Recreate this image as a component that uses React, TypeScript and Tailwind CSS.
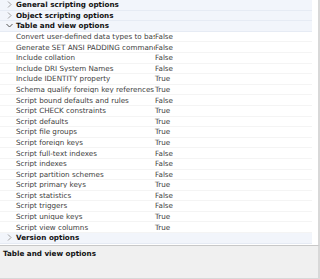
import { ReactNode } from "react";

type Item = [string, string];

const tableItems: Item[] = [
  ["Convert user-defined data types to base types", "False"],
  ["Generate SET ANSI PADDING commands", "False"],
  ["Include collation", "False"],
  ["Include DRI System Names", "False"],
  ["Include IDENTITY property", "True"],
  ["Schema qualify foreign key references", "True"],
  ["Script bound defaults and rules", "False"],
  ["Script CHECK constraints", "True"],
  ["Script defaults", "True"],
  ["Script file groups", "True"],
  ["Script foreign keys", "True"],
  ["Script full-text indexes", "False"],
  ["Script indexes", "False"],
  ["Script partition schemes", "False"],
  ["Script primary keys", "True"],
  ["Script statistics", "False"],
  ["Script triggers", "False"],
  ["Script unique keys", "True"],
  ["Script view columns", "True"],
];

function Chevron({ open }: { open: boolean }) {
  return (
    <svg width="7" height="7" viewBox="0 0 7 7" className="shrink-0">
      {open ? (
        <path d="M0.5 2 L3.5 5 L6.5 2" fill="none" stroke="#555" strokeWidth="1" />
      ) : (
        <path d="M2 0.5 L5 3.5 L2 6.5" fill="none" stroke="#a0a0a0" strokeWidth="1" />
      )}
    </svg>
  );
}

function Group({ label, open, children }: { label: string; open?: boolean; children?: ReactNode }) {
  return (
    <>
      <div className="mr-[6px] flex h-[10.6px] shrink-0 items-center border-b border-[#e6ebf4] bg-[#f2f5fb]">
        <div className="flex w-[16px] justify-center pl-[2px]">
          <Chevron open={!!open} />
        </div>
        <span className="font-bold leading-none text-[#111]">{label}</span>
      </div>
      {children}
    </>
  );
}

function Row({ name, value }: { name: string; value: string }) {
  return (
    <div className="mr-[6px] flex h-[10.6px] shrink-0 items-center border-b border-[#f4f4f4]">
      <div className="w-[155px] shrink-0 overflow-hidden whitespace-nowrap pl-[16px] pr-[2px] leading-none text-[#404040]">
        {name}
      </div>
      <div className="leading-none text-[#404040]">{value}</div>
    </div>
  );
}

export default function App() {
  return (
    <div
      className="flex h-[279px] w-[320px] flex-col bg-white text-[7.2px]"
      style={{ fontFamily: '"DejaVu Sans", sans-serif' }}
    >
      <div className="flex h-[245px] shrink-0 flex-col border-r-2 border-[#d8d8d8]">
        <Group label="General scripting options" />
        <Group label="Object scripting options" />
        <Group label="Table and view options" open>
          {tableItems.map(([n, v]) => (
            <Row key={n} name={n} value={v} />
          ))}
        </Group>
        <Group label="Version options" />
      </div>
      <div className="flex-1 border-t border-b border-r-2 border-t-[#c8c8c8] border-b-[#d8d8d8] border-r-[#d8d8d8] bg-[#f0f0f0] px-[3px] pt-[4px]">
        <div className="font-bold leading-none text-[#111]">Table and view options</div>
      </div>
    </div>
  );
}
